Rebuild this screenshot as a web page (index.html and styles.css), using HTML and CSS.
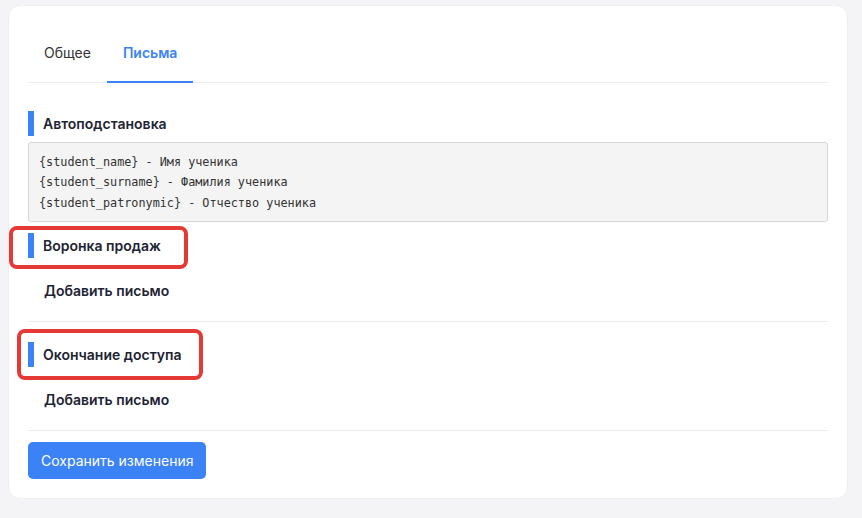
FILE: index.html
```html
<!DOCTYPE html>
<html lang="ru">
<head>
    <meta charset="UTF-8">
    <meta name="viewport" content="width=device-width, initial-scale=1.0">
    <link rel="stylesheet" href="styles.css">
    <title>Письма</title>
</head>
<body>
    <div class="settings-card">
        <div class="tabs">
            <div class="tab">Общее</div>
            <div class="tab active">Письма</div>
        </div>

        <div class="letters">
            <div class="block-title">Автоподстановка</div>
            <div class="vars-box">
                <div>{student_name} - Имя ученика</div>
                <div>{student_surname} - Фамилия ученика</div>
                <div>{student_patronymic} - Отчество ученика</div>
            </div>

            <div class="letter-section first">
                <div class="block-title">
                    Воронка продаж
                    <span class="mark mark-sales"></span>
                </div>
                <div class="add-letter">Добавить письмо</div>
            </div>

            <div class="letter-section">
                <div class="block-title">
                    Окончание доступа
                    <span class="mark mark-access"></span>
                </div>
                <div class="add-letter">Добавить письмо</div>
            </div>

            <button class="save-button">Сохранить изменения</button>
        </div>
    </div>
</body>
</html>
```

FILE: styles.css
```css
body {
    font-family: Inter, "Noto Sans", sans-serif;
    background: #f4f4f6;
    margin: 0;
    padding: 5px 14px 20px 8px;
    color: #1e2433;
}

.settings-card {
    background: #fff;
    border-radius: 12px;
    border: 1px solid #efeff3;
    padding: 19px;
}

.tabs {
    display: flex;
    border-bottom: 1px solid #ebebf0;
}

.tab {
    padding: 18px 16px 18px;
    font-size: 14px;
    line-height: 20px;
    color: #333;
    border-bottom: 2px solid transparent;
    margin-bottom: -1px;
}

.tab.active {
    color: #3b82f6;
    font-weight: 600;
    border-bottom-color: #3b82f6;
}

.letters {
    padding-top: 28px;
}

.block-title {
    position: relative;
    display: flex;
    align-items: center;
    height: 25px;
    padding-left: 9px;
    border-left: 6px solid #3b82f6;
    box-sizing: border-box;
    font-size: 14px;
    font-weight: 600;
}

.vars-box {
    margin-top: 6px;
    background: #f4f4f4;
    border: 1px solid #d6d6d6;
    border-radius: 3px;
    padding: 9px 10px 8px;
    font-family: "DejaVu Sans Mono", "Liberation Mono", monospace;
    font-size: 11.8px;
    line-height: 20.3px;
    color: #333;
}

.letter-section {
    padding: 20px 0;
    border-bottom: 1px solid #ebebf0;
}

.letter-section.first {
    padding-top: 11px;
}

.add-letter {
    margin-top: 23px;
    padding-left: 16px;
    font-size: 14px;
    line-height: 20px;
    font-weight: 600;
}

.mark {
    position: absolute;
    border: 4px solid #e53935;
    border-radius: 8px;
    box-sizing: border-box;
}

.mark-sales {
    left: -25px;
    top: -7px;
    width: 179px;
    height: 43px;
}

.mark-access {
    left: -17px;
    top: -13px;
    width: 186px;
    height: 51px;
}

.save-button {
    margin-top: 11px;
    background: #3b82f6;
    color: #fff;
    border: none;
    border-radius: 5px;
    padding: 0 13px;
    height: 37px;
    font-family: inherit;
    font-size: 14px;
}
```
